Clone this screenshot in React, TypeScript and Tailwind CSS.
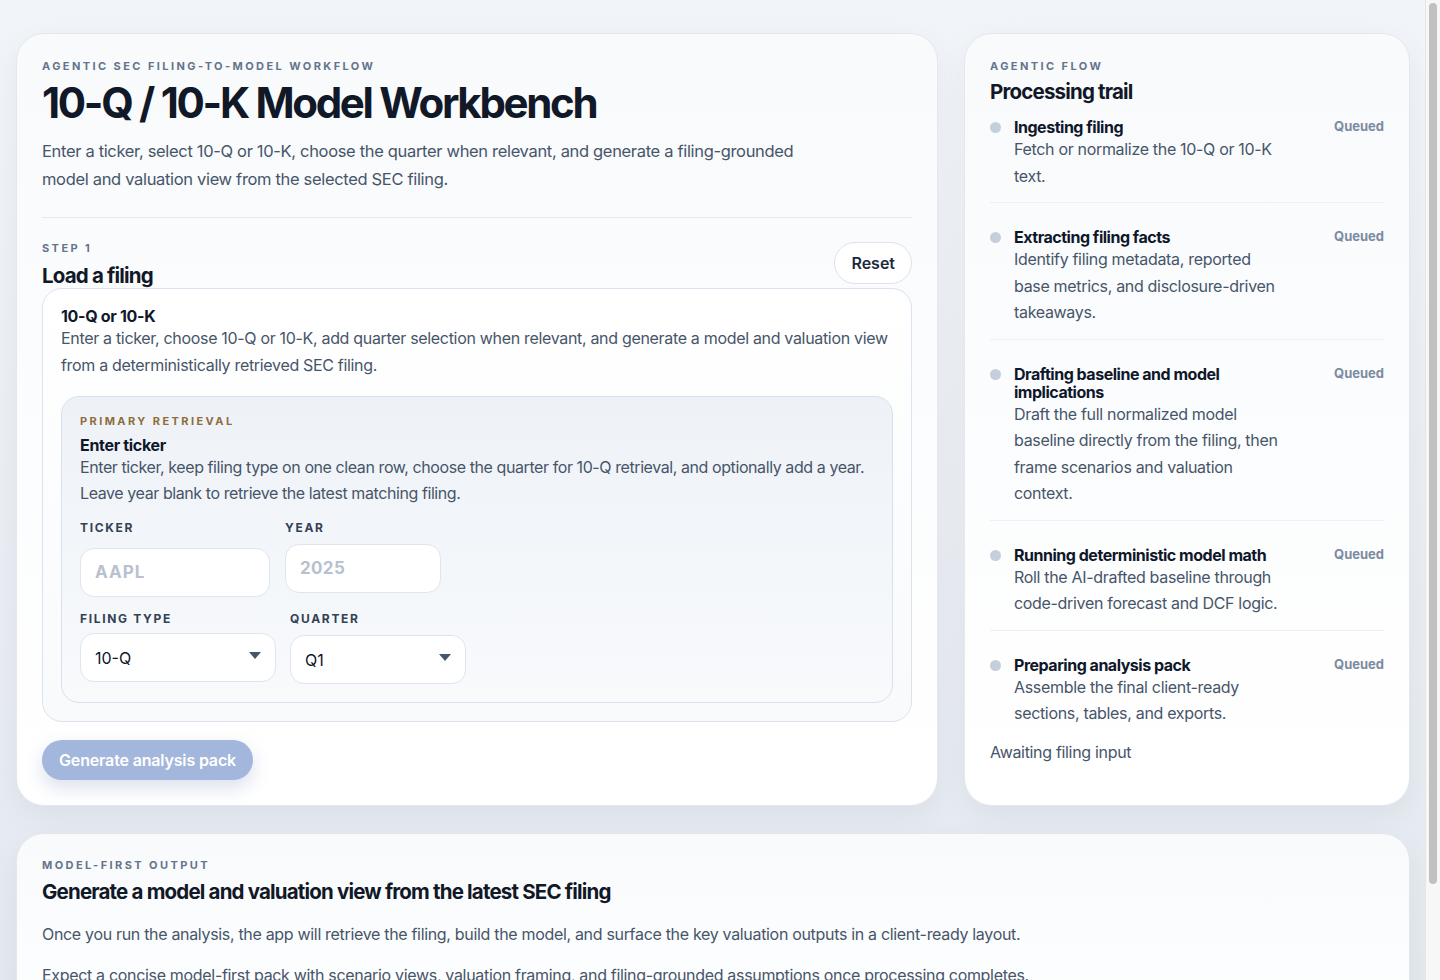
import React from "react";

const font = { fontFamily: "Inter, 'Noto Sans', 'Liberation Sans', sans-serif" };

function Eyebrow({ children, className = "" }: { children: React.ReactNode; className?: string }) {
  return (
    <div className={`text-[11px] font-bold uppercase tracking-[0.22em] leading-[14px] text-[#64748b] ${className}`}>
      {children}
    </div>
  );
}

function Caret() {
  return (
    <svg width="12" height="7" viewBox="0 0 12 7" className="shrink-0">
      <path d="M0 0 L12 0 L6 7 Z" fill="#475569" />
    </svg>
  );
}

const steps = [
  { title: "Ingesting filing", desc: "Fetch or normalize the 10-Q or 10-K text." },
  { title: "Extracting filing facts", desc: "Identify filing metadata, reported base metrics, and disclosure-driven takeaways." },
  { title: "Drafting baseline and model implications", desc: "Draft the full normalized model baseline directly from the filing, then frame scenarios and valuation context." },
  { title: "Running deterministic model math", desc: "Roll the AI-drafted baseline through code-driven forecast and DCF logic." },
  { title: "Preparing analysis pack", desc: "Assemble the final client-ready sections, tables, and exports." },
];

const label = "text-[12px] font-bold uppercase tracking-[0.14em] leading-[14px] text-[#334155]";
const body = "text-[16px] tracking-[-0.02em] text-[#475569]";

export default function App() {
  return (
    <div style={font} className="flex h-[980px] overflow-hidden bg-gradient-to-b from-[#f1f4f8] to-[#e4e9f0] text-[#0f172a]">
      <div className="min-w-0 flex-1 pl-4 pr-[15px] pt-[33px]">
        <div className="grid grid-cols-[1fr_446px] gap-[26px]">
          {/* Left card */}
          <section className="rounded-[28px] border border-[#e3e8ef] bg-gradient-to-b from-[#f8fafc] to-white px-[25px] pt-[25px] pb-[25px] shadow-[0_10px_30px_rgba(15,23,42,0.05)]">
            <Eyebrow>Agentic SEC filing-to-model workflow</Eyebrow>
            <h1 className="mt-[7px] text-[42px] font-bold leading-[46px] tracking-[-0.055em] text-[#111827]">
              10-Q / 10-K Model Workbench
            </h1>
            <p className="mt-[11px] max-w-[770px] text-[16.5px] leading-[28px] tracking-[-0.02em] text-[#475569]">
              Enter a ticker, select 10-Q or 10-K, choose the quarter when relevant, and generate a filing-grounded model and valuation view from the selected SEC filing.
            </p>
            <div className="mt-[24px] h-px bg-[#e5e9f0]" />

            <div className="mt-[23px] flex items-start justify-between">
              <div>
                <Eyebrow>Step 1</Eyebrow>
                <h2 className="mt-[9px] text-[20.5px] font-bold leading-[24px] tracking-[-0.04em] text-[#111827]">Load a filing</h2>
              </div>
              <button className="mt-[1px] h-[42px] rounded-full border border-[#dde3ec] bg-white px-[16px] text-[16px] font-semibold text-[#1e293b]">
                Reset
              </button>
            </div>

            <div className="rounded-[20px] border border-[#dbe3ee] bg-gradient-to-b from-white to-[#f8fafc] px-[18px] pt-[18px] pb-[18px]">
              <div className="text-[16px] font-bold leading-[18px] tracking-[-0.02em] text-[#0f172a]">10-Q or 10-K</div>
              <p className={`${body} leading-[27px]`}>
                Enter a ticker, choose 10-Q or 10-K, add quarter selection when relevant, and generate a model and valuation view from a deterministically retrieved SEC filing.
              </p>

              <div className="mt-[17px] rounded-[18px] border border-[#d6e0ee] bg-gradient-to-b from-[#eef2f7] to-[#f8fafc] px-[18px] pt-[17px] pb-[18px]">
                <div className="text-[11px] font-bold uppercase tracking-[0.22em] leading-[14px] text-[#8d6d3c]">Primary retrieval</div>
                <div className="mt-[8px] text-[16px] font-bold leading-[18px] tracking-[-0.02em] text-[#0f172a]">Enter ticker</div>
                <p className="text-[16px] leading-[26px] tracking-[-0.026em] text-[#475569]">
                  Enter ticker, keep filing type on one clean row, choose the quarter for 10-Q retrieval, and optionally add a year. Leave year blank to retrieve the latest matching filing.
                </p>

                <div className="mt-[15px] flex items-start gap-[15px]">
                  <div>
                    <div className={label}>Ticker</div>
                    <div className="mt-[13px] flex h-[49px] w-[190px] items-center rounded-[14px] border border-[#dfe5ee] bg-white px-[14px] text-[17px] font-bold tracking-[0.06em] text-[#b7c1cf]">
                      AAPL
                    </div>
                  </div>
                  <div>
                    <div className={label}>Year</div>
                    <div className="mt-[9px] flex h-[49px] w-[156px] items-center rounded-[14px] border border-[#dfe5ee] bg-white px-[14px] text-[17px] font-bold tracking-[0.02em] text-[#b7c1cf]">
                      2025
                    </div>
                  </div>
                </div>

                <div className="mt-[15px] flex items-start gap-[14px]">
                  <div>
                    <div className={label}>Filing type</div>
                    <div className="mt-[7px] flex h-[49px] w-[196px] items-center justify-between rounded-[14px] border border-[#dfe5ee] bg-white pl-[14px] pr-[14px] text-[16px] text-[#0f172a]">
                      <span>10-Q</span>
                      <span className="-mt-[4px]"><Caret /></span>
                    </div>
                  </div>
                  <div>
                    <div className={label}>Quarter</div>
                    <div className="mt-[9px] flex h-[49px] w-[176px] items-center justify-between rounded-[14px] border border-[#dfe5ee] bg-white pl-[14px] pr-[14px] text-[16px] text-[#0f172a]">
                      <span>Q1</span>
                      <span className="-mt-[4px]"><Caret /></span>
                    </div>
                  </div>
                </div>
              </div>
            </div>

            <button className="mt-[18px] h-[40px] rounded-full bg-[#a3b6dc] px-[17px] text-[16px] font-semibold tracking-[-0.01em] text-white shadow-[0_8px_18px_rgba(59,91,160,0.18)]">
              Generate analysis pack
            </button>
          </section>

          {/* Right card */}
          <aside className="rounded-[28px] border border-[#e3e8ef] bg-gradient-to-b from-[#f8fafc] to-white px-[25px] pt-[25px] pb-[25px] shadow-[0_10px_30px_rgba(15,23,42,0.05)]">
            <Eyebrow>Agentic flow</Eyebrow>
            <h2 className="mt-[7px] text-[20.5px] font-bold leading-[24px] tracking-[-0.04em] text-[#111827]">Processing trail</h2>
            <ul className="mt-[14px]">
              {steps.map((s, i) => (
                <li
                  key={s.title}
                  className={`grid grid-cols-[24px_minmax(0,268px)_1fr] ${i === 0 ? "pt-0" : "pt-[25px]"} ${i < steps.length - 1 ? "border-b border-[#edf0f4] pb-[13px]" : "pb-0"}`}
                >
                  <span className="mt-[4px] h-[11px] w-[11px] rounded-full bg-[#c5cfdc]" />
                  <div>
                    <div className="text-[16px] font-bold leading-[18px] tracking-[-0.03em] text-[#0f172a]">{s.title}</div>
                    <p className={`${body} leading-[26.5px]`}>{s.desc}</p>
                  </div>
                  <div className="text-right text-[13px] font-bold leading-[16px] text-[#7c8ba1]">Queued</div>
                </li>
              ))}
            </ul>
            <p className={`mt-[13px] ${body} leading-[24px]`}>Awaiting filing input</p>
          </aside>
        </div>

        {/* Bottom card */}
        <section className="mt-[27px] min-h-[225px] rounded-[28px] border border-[#e3e8ef] bg-gradient-to-b from-[#f8fafc] to-white px-[25px] pt-[24px] pb-[25px] shadow-[0_10px_30px_rgba(15,23,42,0.05)]">
          <Eyebrow>Model-first output</Eyebrow>
          <h2 className="mt-[8px] text-[20.5px] font-bold leading-[24px] tracking-[-0.04em] text-[#111827]">
            Generate a model and valuation view from the latest SEC filing
          </h2>
          <p className={`mt-[18px] ${body} leading-[24px]`}>
            Once you run the analysis, the app will retrieve the filing, build the model, and surface the key valuation outputs in a client-ready layout.
          </p>
          <p className={`mt-[17px] ${body} leading-[24px]`}>
            Expect a concise model-first pack with scenario views, valuation framing, and filing-grounded assumptions once processing completes.
          </p>
        </section>
      </div>

      {/* Scrollbar */}
      <div className="flex w-[15px] shrink-0 flex-col border-l border-[#e6e6e6] bg-[#f7f7f7] pt-[3px]">
        <div className="ml-[3px] h-[881px] w-[8px] rounded-full bg-[#c1c1c1]" />
      </div>
    </div>
  );
}
